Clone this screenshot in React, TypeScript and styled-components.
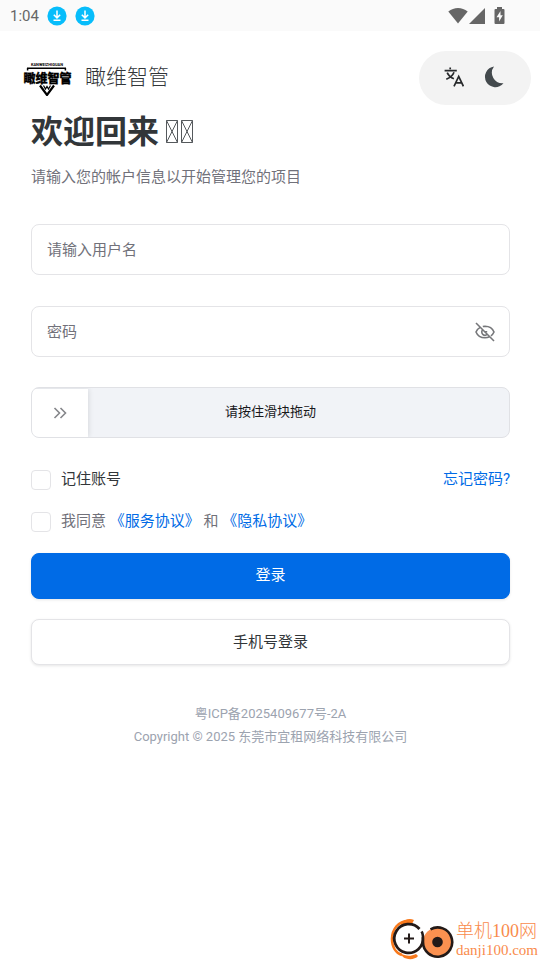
import React, { useState } from 'react';
import styled, { createGlobalStyle } from 'styled-components';

const GlobalStyle = createGlobalStyle`
  *, *::before, *::after { box-sizing: border-box; }
  body {
    margin: 0;
    background: #fff;
    color: #323639;
    font-family: Roboto, "Noto Sans CJK SC", sans-serif;
    font-size: 15px;
    line-height: 24px;
  }
  button, input { font: inherit; color: inherit; }
  svg { display: block; flex: none; }
`;

const Page = styled.div`
  min-height: 100vh;
  display: flex;
  flex-direction: column;
`;

const StatusBar = styled.div`
  display: flex;
  align-items: center;
  justify-content: space-between;
  height: 31px;
  padding: 0 34px 0 10px;
  background: #fafafa;
  color: #666;
`;

const StatusGroup = styled.div`
  display: flex;
  align-items: center;
  gap: 8px;
`;

const Header = styled.header`
  display: flex;
  align-items: center;
  justify-content: space-between;
  padding: 20px 9px 0 22px;
`;

const Brand = styled.a`
  display: flex;
  align-items: center;
  gap: 12px;
  color: #323639;
  font-size: 21px;
  font-weight: 300;
  text-decoration: none;
`;

const BrandName = styled.span`
  padding-bottom: 2px;
`;

const Toolbar = styled.div`
  display: flex;
  align-items: center;
  justify-content: center;
  gap: 8px;
  width: 112px;
  height: 54px;
  padding: 0 2px 2px 0;
  border-radius: 27px;
  background: #f3f3f3;
`;

const IconButton = styled.button`
  display: grid;
  place-items: center;
  width: 32px;
  height: 32px;
  padding: 0;
  border: 0;
  background: none;
  cursor: pointer;
`;

const Main = styled.main`
  padding: 7px 30px 0 31px;
`;

const Title = styled.h1`
  display: flex;
  align-items: center;
  gap: 7px;
  margin: 0;
  font-size: 32px;
  line-height: 40px;
  font-weight: 700;
`;

const Subtitle = styled.p`
  margin: 13px 0 35px;
  color: #71717a;
`;

const Form = styled.form`
  display: flex;
  flex-direction: column;
`;

const Field = styled.div`
  display: flex;
  align-items: center;
  height: 51px;
  margin-bottom: 31px;
  padding: 0 8px 0 15px;
  border: 1px solid #e4e4e7;
  border-radius: 8px;
`;

const TextInput = styled.input`
  flex: 1;
  min-width: 0;
  height: 100%;
  padding: 0;
  border: 0;
  outline: 0;
  background: none;
  &::placeholder { color: #71717a; opacity: 1; }
`;

const Slider = styled.div`
  position: relative;
  display: grid;
  grid-template-columns: 56px 1fr 56px;
  height: 51px;
  margin-top: -1px;
  border: 1px solid #e0e1e5;
  border-radius: 8px;
  background: #f1f3f7;
  overflow: hidden;
`;

const Handle = styled.div`
  display: grid;
  place-items: center;
  margin-top: 1px;
  background: #fff;
  box-shadow: 1px 0 5px rgba(0, 0, 0, 0.1);
`;

const SliderLabel = styled.label`
  text-align: center;
  font-size: 13px;
  line-height: 48px;
  color: #18181b;
`;

const SliderInput = styled.input`
  position: absolute;
  inset: 0;
  width: 100%;
  height: 100%;
  margin: 0;
  opacity: 0;
  cursor: grab;
`;

const Options = styled.div`
  display: flex;
  flex-direction: column;
  gap: 18px;
  margin: 29px 0 20px;
`;

const Row = styled.div`
  display: flex;
  justify-content: space-between;
`;

const CheckLabel = styled.label<{ $muted?: boolean }>`
  display: flex;
  align-items: flex-start;
  gap: 10px;
  color: ${(p) => (p.$muted ? '#71717a' : '#323639')};
`;

const Checkbox = styled.input`
  appearance: none;
  width: 20px;
  height: 20px;
  margin: 3px 0 0;
  border: 1px solid #e4e4e7;
  border-radius: 4px;
  background: #fff;
  &:checked { background: #006be6; border-color: #006be6; }
`;

const Link = styled.a`
  color: #006be6;
  text-decoration: none;
`;

const Action = styled.button<{ $primary?: boolean }>`
  height: 46px;
  margin-bottom: 20px;
  padding: 0 0 ${(p) => (p.$primary ? 2 : 0)}px;
  border: 1px solid ${(p) => (p.$primary ? '#006be6' : '#e4e4e7')};
  border-radius: 8px;
  background: ${(p) => (p.$primary ? '#006be6' : '#fff')};
  color: ${(p) => (p.$primary ? '#fff' : '#323639')};
  box-shadow: 0 1px 3px rgba(0, 0, 0, 0.1);
  cursor: pointer;
`;

const Footer = styled.footer`
  display: flex;
  flex-direction: column;
  align-items: center;
  padding: 17px 30px 24px 31px;
  font-size: 13px;
  line-height: 23px;
  color: #9ca3af;
`;

const FooterLink = styled.a`
  color: inherit;
  text-decoration: none;
`;

const SiteMark = styled.div`
  display: flex;
  align-items: center;
  align-self: flex-end;
  gap: 2px;
  margin-top: auto;
  padding-right: 2px;
  color: #f98b4c;
`;

const SiteName = styled.div`
  font-family: "Liberation Serif", "Noto Sans CJK SC", serif;
  font-size: 18px;
  font-weight: 300;
  line-height: 21px;
`;

const SiteUrl = styled.div`
  font-family: "Liberation Serif", serif;
  font-size: 15px;
  line-height: 16px;
`;

const DownloadIcon = () => (
  <svg width="20" height="20" viewBox="0 0 20 20" aria-hidden="true">
    <circle cx="10" cy="10" r="9.6" fill="#07bdfb" />
    <path d="M10 4.5v7M6.8 8.7l3.2 3.2 3.2-3.2M6.5 14.3h7" fill="none" stroke="#fff" strokeWidth="1.5" />
  </svg>
);

const BrandLogo = () => (
  <svg width="51" height="36" viewBox="0 0 51 36" aria-hidden="true">
    <text x="25" y="6" textAnchor="middle" fontFamily="Roboto" fontSize="4" fontWeight="700">KANWEIZHIGUAN</text>
    <path d="M5 8.3h39M5.6 8v2.4M43.4 8v2.4" stroke="#000" strokeWidth="1.5" fill="none" />
    <text
      x="25.5" y="22.5" textAnchor="middle" fontFamily="Noto Sans CJK SC" fontSize="12"
      fontWeight="900" stroke="#000" strokeWidth="0.3"
    >瞰维智管</text>
    <path d="M18 25.5 25 35l7-9.5" stroke="#000" strokeWidth="2.2" fill="none" />
    <path d="m21.5 25.5 2 3.5 1.5-2.5 1.5 2.5 2-3.5" stroke="#000" strokeWidth="1.2" fill="none" />
  </svg>
);

const TranslateIcon = () => (
  <svg width="20" height="20" viewBox="0 0 20 20" fill="none" stroke="#27292b" strokeWidth="1.7" aria-hidden="true">
    <path d="M6.2.4v1.8M.6 3.7h12.2M3.2 5.6c1.3 2.9 3.5 4.9 6.7 6.1M10 5.2C8.8 8.4 6.4 10.6 2.3 12.2" />
    <path d="M10 19.3 14.7 9.5l4.7 9.8M11.6 15.9h6.2" />
  </svg>
);

const MoonIcon = () => (
  <svg width="22" height="22" viewBox="0 0 22 22" aria-hidden="true">
    <path d="M11 .5A10.4 10.4 0 1 0 20.5 17.3 10.6 10.6 0 0 1 11 .5Z" fill="#43494d" />
  </svg>
);

const HiddenEyeIcon = () => (
  <svg width="20" height="20" viewBox="0 0 20 20" fill="none" stroke="#76777a" strokeWidth="1.6" aria-hidden="true">
    <path d="M5.2 5.4C3.2 6.5 1.8 8 1 10c1.5 3.7 4.8 5.8 9 5.8 1.7 0 3.2-.4 4.5-1M7.8 4.5A12 12 0 0 1 10 4.2c4.2 0 7.5 2.1 9 5.8-.7 1.6-1.7 2.9-3.1 3.8" />
    <path d="M7.7 7.8a3.2 3.2 0 1 0 4.6 4.5M9.8 9.8l2.4 0" />
    <path d="m1 1 18 18" />
  </svg>
);

const MissingGlyphs = () => (
  <svg width="27" height="24" viewBox="0 0 27 24" fill="none" stroke="#55595c" strokeWidth="1" aria-hidden="true">
    <path d="M.5.5h11v22H.5zM.5.5l11 22M11.5.5l-11 22" />
    <path d="M15.5.5h11v22h-11zM15.5.5l11 22M26.5.5l-11 22" />
  </svg>
);

const StatusIcons = () => (
  <svg width="58" height="18" viewBox="0 0 58 18" fill="#666" aria-hidden="true">
    <path d="M.3 4.5C6-.3 14-.3 19.7 4.5L10 16.5Z" />
    <path d="M37 1v16H21Z" />
    <path d="M49 0h5v2h1.5q1 0 1 1v13q0 1-1 1h-8q-1 0-1-1V3q0-1 1-1H49Z" />
    <path d="m52.5 4-4 6.2h2.6V14.5l3.7-6.2h-2.3Z" fill="#fafafa" />
  </svg>
);

const SiteLogo = () => (
  <svg width="64" height="42" viewBox="0 0 64 42" fill="none" aria-hidden="true">
    <path d="M20 3C8 2 2 12 2 21c0 8 4 14 10 16" stroke="#f8791c" strokeWidth="2.6" />
    <path d="M11 5c4-4 9-5 13-3l-2 4c-4-1-7 0-11 2zM10 35c5 3 10 4 16 1l2 2c-3 4-11 4-15 1z" fill="#f8791c" />
    <path d="M29.5 11a14.4 14.4 0 1 0 3.5 8" stroke="#231a18" strokeWidth="2.8" />
    <path d="M19 15.5v10M14 20.5h10" stroke="#231a18" strokeWidth="2" />
    <circle cx="47.5" cy="24" r="14.5" fill="#fb9150" />
    <path d="M31.5 13.5c2 2.5 1.5 5.5 1.5 10.5a14.6 14.6 0 1 0 7.5-12.7" stroke="#231a18" strokeWidth="2.6" />
    <circle cx="47.5" cy="24" r="5.3" fill="#231a18" />
  </svg>
);

export default function App() {
  const [progress, setProgress] = useState(0);
  const [visible, setVisible] = useState(false);

  return (
    <Page>
      <GlobalStyle />
      <StatusBar>
        <StatusGroup>
          <span>1:04</span>
          <DownloadIcon />
          <DownloadIcon />
        </StatusGroup>
        <StatusIcons />
      </StatusBar>
      <Header>
        <Brand href="#">
          <BrandLogo />
          <BrandName>瞰维智管</BrandName>
        </Brand>
        <Toolbar>
          <IconButton type="button" aria-label="切换语言"><TranslateIcon /></IconButton>
          <IconButton type="button" aria-label="切换主题"><MoonIcon /></IconButton>
        </Toolbar>
      </Header>
      <Main>
        <Title>欢迎回来<MissingGlyphs /></Title>
        <Subtitle>请输入您的帐户信息以开始管理您的项目</Subtitle>
        <Form onSubmit={(e) => e.preventDefault()}>
          <Field>
            <TextInput type="text" aria-label="用户名" placeholder="请输入用户名" />
          </Field>
          <Field>
            <TextInput type={visible ? 'text' : 'password'} aria-label="密码" placeholder="密码" />
            <IconButton type="button" aria-label="显示密码" onClick={() => setVisible(!visible)}>
              <HiddenEyeIcon />
            </IconButton>
          </Field>
          <Slider>
            <Handle style={{ transform: `translateX(${progress * 4}px)` }}>
              <svg width="14" height="12" viewBox="0 0 14 12" fill="none" stroke="#85868a" strokeWidth="1.6" aria-hidden="true">
                <path d="m1.5 1 5 5-5 5M7.5 1l5 5-5 5" />
              </svg>
            </Handle>
            <SliderLabel htmlFor="verify">请按住滑块拖动</SliderLabel>
            <SliderInput
              id="verify" type="range" min={0} max={100} value={progress}
              onChange={(e) => setProgress(Number(e.target.value))}
            />
          </Slider>
          <Options>
            <Row>
              <CheckLabel><Checkbox type="checkbox" />记住账号</CheckLabel>
              <Link href="#">忘记密码?</Link>
            </Row>
            <Row>
              <CheckLabel $muted>
                <Checkbox type="checkbox" />
                <span>我同意 <Link href="#">《服务协议》</Link> 和 <Link href="#">《隐私协议》</Link></span>
              </CheckLabel>
            </Row>
          </Options>
          <Action type="submit" $primary>登录</Action>
          <Action type="button">手机号登录</Action>
        </Form>
      </Main>
      <Footer>
        <FooterLink href="#">粤ICP备2025409677号-2A</FooterLink>
        <span>Copyright © 2025 东莞市宜租网络科技有限公司</span>
      </Footer>
      <SiteMark>
        <SiteLogo />
        <div>
          <SiteName>单机100网</SiteName>
          <SiteUrl>danji100.com</SiteUrl>
        </div>
      </SiteMark>
    </Page>
  );
}
